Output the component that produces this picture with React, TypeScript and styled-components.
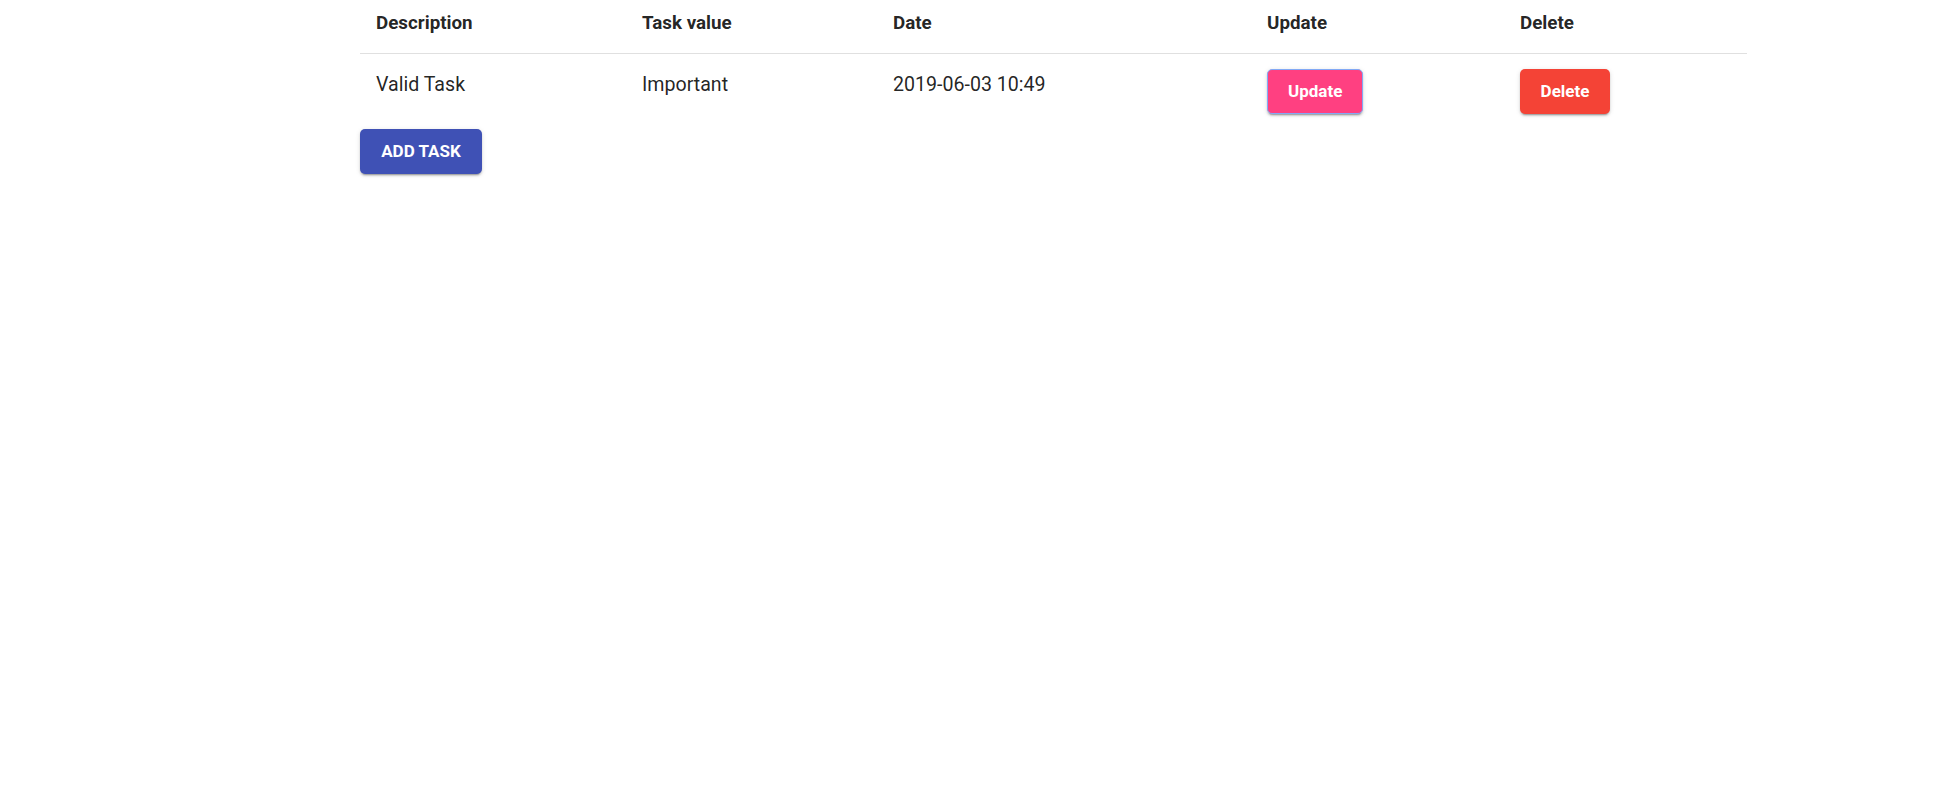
import React from "react";
import styled, { createGlobalStyle } from "styled-components";

const Global = createGlobalStyle`
  html, body { margin: 0; padding: 0; background: #fff; }
  body { font-family: Roboto, "Liberation Sans", Arial, sans-serif; color: rgba(0,0,0,0.87); }
`;

const Page = styled.div`
  width: 1940px;
  height: 806px;
  padding-left: 360px;
  box-sizing: border-box;
`;

const Table = styled.div`
  width: 1387px;
  display: grid;
  grid-template-columns: 266px 251px 374px 253px 243px;
`;

const HeadCell = styled.div`
  padding: 11px 16px 0 16px;
  height: 53.5px;
  box-sizing: border-box;
  font-size: 18.8px;
  line-height: 25px;
  font-weight: 700;
  color: rgba(0,0,0,0.87);
  border-bottom: 1.5px solid #e0e0e0;
`;

const Cell = styled.div<{ $button?: boolean }>`
  padding: ${(p) => (p.$button ? "15.25px 16px 15px" : "18.25px 16px 0")};
  font-size: 19.6px;
  line-height: 25px;
  font-weight: 400;
  color: rgba(0,0,0,0.87);
`;

const Button = styled.button<{ $bg: string; $focus?: boolean; $upper?: boolean }>`
  height: 45px;
  padding: 0 20px;
  border: ${(p) => (p.$focus ? "1.25px solid #82a9f5" : "none")};
  border-radius: 5px;
  background: ${(p) => p.$bg};
  color: #fff;
  font-family: Roboto, "Liberation Sans", Arial, sans-serif;
  font-size: 17px;
  font-weight: 700;
  text-transform: ${(p) => (p.$upper ? "uppercase" : "none")};
  box-shadow: 0px 3px 1px -2px rgba(0,0,0,0.2), 0px 2px 2px 0px rgba(0,0,0,0.14), 0px 1px 5px 0px rgba(0,0,0,0.12);
  cursor: pointer;
`;

const Actions = styled.div`
  display: flex;
`;

export default function App() {
  return (
    <>
      <Global />
      <Page>
        <Table>
          <HeadCell>Description</HeadCell>
          <HeadCell>Task value</HeadCell>
          <HeadCell>Date</HeadCell>
          <HeadCell>Update</HeadCell>
          <HeadCell>Delete</HeadCell>
          <Cell>Valid Task</Cell>
          <Cell>Important</Cell>
          <Cell>2019-06-03 10:49</Cell>
          <Cell $button>
            <Button $bg="#ff4081" $focus style={{ width: 96 }}>Update</Button>
          </Cell>
          <Cell $button>
            <Button $bg="#f44336" style={{ width: 90 }}>Delete</Button>
          </Cell>
        </Table>
        <Actions>
          <Button $bg="#3f51b5" $upper style={{ width: 122 }}>Add Task</Button>
        </Actions>
      </Page>
    </>
  );
}
